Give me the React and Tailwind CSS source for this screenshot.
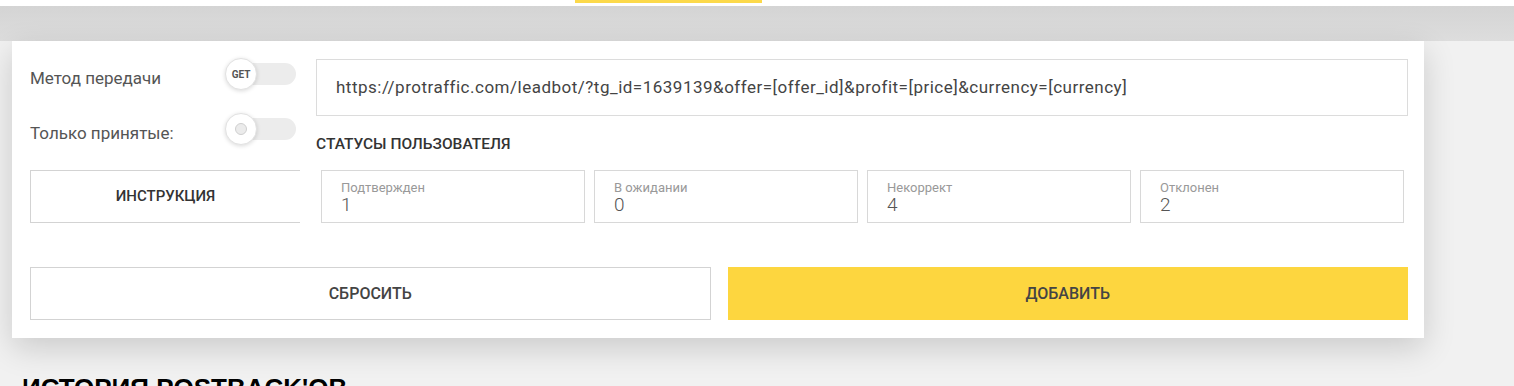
import React from "react";

const statuses = [
  { label: "Подтвержден", value: "1" },
  { label: "В ожидании", value: "0" },
  { label: "Некоррект", value: "4" },
  { label: "Отклонен", value: "2" },
];

const Toggle = ({ children }) => (
  <div className="relative w-[71px] h-[32px]">
    {/* track */}
    <div className="absolute left-[8px] top-[5px] w-[63px] h-[22px] rounded-full bg-[#ececec]" />
    {/* knob */}
    <div className="absolute left-0 top-0 w-[32px] h-[32px] rounded-full bg-white border border-[#e2e2e2] shadow-[0_1px_4px_rgba(0,0,0,0.15)] flex items-center justify-center">
      {children}
    </div>
  </div>
);

export default function App() {
  return (
    <div className="w-full h-[386px] overflow-hidden bg-[#f1f1f1] font-['Roboto','Liberation_Sans',sans-serif]">
      {/* top nav strip */}
      <div className="h-[6px] bg-white">
        <div className="ml-[575px] w-[187px] h-[3px] bg-[#fcd94a]" />
      </div>
      <div className="h-[35px] bg-gradient-to-b from-[#d4d4d4] to-[#dddddd]" />

      {/* card */}
      <div className="relative ml-[12px] w-[1412px] bg-white shadow-[0_10px_30px_rgba(0,0,0,0.16)] pl-[18px] pr-[16px] pt-[18px] pb-[18px]">
        <div className="flex">
          {/* left column */}
          <div className="w-[270px] shrink-0">
            <div className="flex items-center h-[32px] mt-[-1px]">
              <span className="w-[195px] text-[17px] text-[#555] pt-[10px]">Метод передачи</span>
              <Toggle>
                <span className="text-[10px] font-bold text-[#555]">GET</span>
              </Toggle>
            </div>
            <div className="flex items-center h-[32px] mt-[23px]">
              <span className="w-[195px] text-[17px] text-[#555] pt-[10px]">Только принятые:</span>
              <Toggle>
                <span className="w-[12px] h-[12px] rounded-full bg-[#ebebeb] border border-[#cfcfcf]" />
              </Toggle>
            </div>
            <div className="mt-[25px] h-[53px] border border-r-0 border-[#d3d3d3] flex items-center justify-center text-[15px] font-medium text-[#333]">
              ИНСТРУКЦИЯ
            </div>
          </div>

          {/* right column */}
          <div className="ml-[16px] flex-1">
            <div className="h-[57px] border border-[#dcdcdc] flex items-center pl-[19px] text-[17px] tracking-[0.5px] text-[#444]">
              https://protraffic.com/leadbot/?tg_id=1639139&amp;offer=[offer_id]&amp;profit=[price]&amp;currency=[currency]
            </div>
            <div className="mt-[18px] text-[15.5px] font-medium text-[#333] leading-[20px]">
              СТАТУСЫ ПОЛЬЗОВАТЕЛЯ
            </div>
            <div className="mt-[16px] ml-[5px] mr-[4px] grid grid-cols-4 gap-[9px]">
              {statuses.map((s) => (
                <div
                  key={s.label}
                  className="h-[53px] border border-[#d8d8d8] pl-[19px] pt-[10px] leading-none"
                >
                  <div className="text-[13px] text-[#999]">{s.label}</div>
                  <div className="text-[19px] font-light text-[#555] mt-[1px]">{s.value}</div>
                </div>
              ))}
            </div>
          </div>
        </div>

        {/* buttons */}
        <div className="mt-[44px] grid grid-cols-2 gap-[17px]">
          <button className="h-[53px] border border-[#d3d3d3] bg-white text-[16px] font-medium text-[#444]">
            СБРОСИТЬ
          </button>
          <button className="h-[53px] bg-[#fdd63f] text-[16px] font-medium text-[#444]">
            ДОБАВИТЬ
          </button>
        </div>
      </div>

      <h2 className="mt-[35px] ml-[22px] text-[26px] font-bold text-black font-['Liberation_Sans',sans-serif] leading-[30px]">
        ИСТОРИЯ POSTBACK'OB
      </h2>
    </div>
  );
}
